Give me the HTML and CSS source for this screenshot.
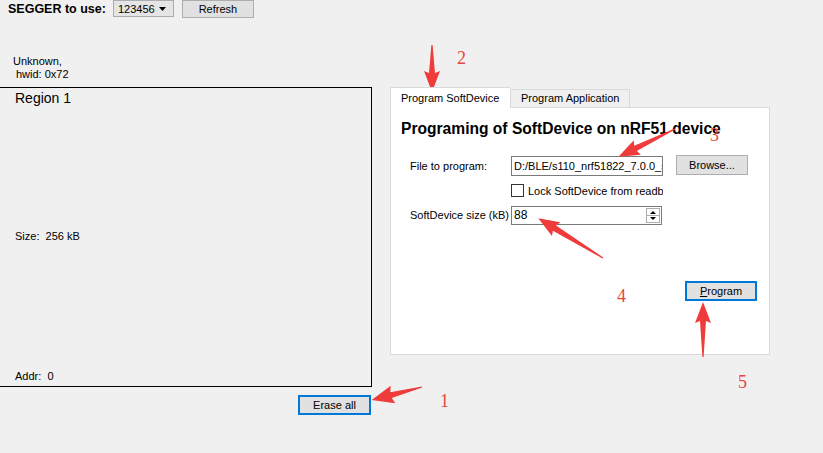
FILE: index.html
```html
<!DOCTYPE html>
<html lang="en">
<head>
    <meta charset="UTF-8">
    <title>nRFgo Studio - Program SoftDevice</title>
    <link rel="stylesheet" href="styles.css">
</head>
<body>
    <div class="toolbar">
        <span class="segger-label">SEGGER to use:</span>
        <div class="combo">
            <span>123456</span>
            <svg class="combo-arrow" width="7" height="4" viewBox="0 0 7 4"><path d="M0 0h7L3.5 4z" fill="#000"/></svg>
        </div>
        <button class="btn refresh">Refresh</button>
    </div>

    <div class="main">
        <div class="left">
            <div class="hwid">
                <div>Unknown,</div>
                <div class="hwid-line">hwid: 0x72</div>
            </div>
            <div class="region">
                <div class="region-title">Region 1</div>
                <div class="region-size">Size:&nbsp; 256 kB</div>
                <div>Addr:&nbsp; 0</div>
            </div>
            <button class="btn default erase">Erase all</button>
        </div>

        <div class="right">
            <div class="tabbar">
                <div class="tab active">Program SoftDevice</div>
                <div class="tab">Program Application</div>
            </div>
            <div class="pane">
                <h1 class="pane-title">Programing of SoftDevice on nRF51 device</h1>
                <div class="form">
                    <label class="form-label">File to program:</label>
                    <div class="textbox">D:/BLE/s110_nrf51822_7.0.0_softdevice.hex</div>
                    <button class="btn browse">Browse...</button>

                    <span></span>
                    <div class="check-row">
                        <span class="checkbox"></span>
                        <span>Lock SoftDevice from readback protection</span>
                    </div>
                    <span></span>

                    <label class="form-label">SoftDevice size (kB)</label>
                    <div class="spinbox">
                        <span>88</span>
                        <svg class="spin-buttons" width="14" height="15" viewBox="0 0 14 15">
                            <rect x="0.5" y="0.5" width="13" height="14" fill="#fff" stroke="#adadad"/>
                            <line x1="1" y1="7.5" x2="13" y2="7.5" stroke="#adadad"/>
                            <path d="M4 6h6L7 3z" fill="#000"/>
                            <path d="M4 9h6l-3 3z" fill="#000"/>
                        </svg>
                    </div>
                    <span></span>
                </div>
                <button class="btn default program"><u>P</u>rogram</button>
            </div>
        </div>
    </div>

    <svg class="marks" width="823" height="453" viewBox="0 0 823 453">
        <g fill="#f03b3b">
            <polygon transform="translate(432,45) rotate(90)" points="0,-0.6 28,-3 26,-8 47,0 26,8 28,3 0,0.6"/>
            <polygon transform="translate(675,129) rotate(153.8)" points="0,-0.6 44,-3 42,-8 63,0 42,8 44,3 0,0.6"/>
            <polygon transform="translate(603,258) rotate(-148.4)" points="0,-0.6 57,-3 55,-8 76,0 55,8 57,3 0,0.6"/>
            <polygon transform="translate(703,357) rotate(-90)" points="0,-0.6 36,-3 34,-8 55,0 34,8 36,3 0,0.6"/>
            <polygon transform="translate(422,387) rotate(165.4)" points="0,-0.6 32,-3 30,-9 52,0 30,9 32,3 0,0.6"/>
        </g>
        <g class="mark-num" fill="#e8453c">
            <text x="457" y="64">2</text>
            <text x="710" y="141">3</text>
            <text x="617" y="302">4</text>
            <text x="738" y="388">5</text>
            <text x="440" y="407">1</text>
        </g>
    </svg>
</body>
</html>
```

FILE: styles.css
```css
* {
    margin: 0;
    padding: 0;
    box-sizing: border-box;
}
body {
    position: relative;
    width: 823px;
    height: 453px;
    overflow: hidden;
    background-color: #f0f0f0;
    font-family: 'Liberation Sans', Arial, sans-serif;
    font-size: 11px;
    color: #000;
}
.toolbar {
    display: flex;
    align-items: flex-start;
    height: 18px;
    padding-left: 8px;
}
.segger-label {
    font-weight: bold;
    font-size: 12.5px;
    line-height: 18px;
}
.combo {
    display: flex;
    align-items: center;
    justify-content: space-between;
    width: 61px;
    height: 17px;
    margin-left: 7px;
    padding: 0 7px 0 4px;
    background-color: #e5e5e5;
    border: 1px solid #adadad;
}
.btn {
    font-family: 'Liberation Sans', Arial, sans-serif;
    font-size: 11px;
    color: #000;
    background-color: #e1e1e1;
    border: 1px solid #adadad;
}
.btn.default {
    border: 2px solid #0078d7;
}
.refresh {
    width: 72px;
    height: 18px;
    margin-left: 8px;
}
.main {
    display: flex;
    align-items: flex-start;
}
.left {
    width: 373px;
    margin-left: -1px;
    display: flex;
    flex-direction: column;
}
.hwid {
    padding: 37px 0 0 14px;
    line-height: 13px;
}
.hwid-line {
    padding-left: 3px;
}
.region {
    display: grid;
    grid-template-rows: auto 1fr auto;
    height: 300px;
    margin-top: 6px;
    padding: 2px 0 3px 15px;
    border: 1px solid #000;
    line-height: 13px;
}
.region-title {
    font-size: 14px;
    line-height: 17px;
}
.region-size {
    align-self: center;
    margin-bottom: 5px;
}
.erase {
    width: 73px;
    height: 20px;
    margin: 8px 0 0 299px;
}
.right {
    margin: 70px 0 0 18px;
    width: 380px;
}
.tabbar {
    display: flex;
    align-items: flex-end;
    height: 19px;
}
.tab {
    height: 18px;
    padding: 0 10px;
    line-height: 16px;
    background-color: #f0f0f0;
    border: 1px solid #d9d9d9;
    border-bottom: none;
}
.tab.active {
    position: relative;
    z-index: 1;
    width: 120px;
    height: 21px;
    margin-bottom: -1px;
    line-height: 20px;
    background-color: #fff;
    border-right: none;
}
.pane {
    display: flex;
    flex-direction: column;
    height: 248px;
    padding: 12px 12px 0 10px;
    background-color: #fff;
    border: 1px solid #d9d9d9;
}
.pane-title {
    font-size: 15.6px;
    line-height: 18px;
    font-weight: bold;
}
.form {
    display: grid;
    grid-template-columns: 110px 152px auto;
    grid-template-rows: 21px 19px 20px;
    row-gap: 5px;
    align-items: center;
    margin-top: 17px;
}
.form-label {
    padding-left: 9px;
    white-space: nowrap;
}
.textbox {
    height: 20px;
    padding: 0 2px;
    line-height: 18px;
    white-space: nowrap;
    overflow: hidden;
    background-color: #fff;
    border: 1px solid #7a7a7a;
}
.browse {
    justify-self: start;
    width: 72px;
    height: 20px;
    margin: -1px 0 0 13px;
}
.check-row {
    display: flex;
    align-items: center;
    gap: 4px;
    white-space: nowrap;
    overflow: hidden;
}
.checkbox {
    flex: none;
    width: 13px;
    height: 13px;
    background-color: #fff;
    border: 1px solid #333;
}
.spinbox {
    display: flex;
    align-items: center;
    justify-content: space-between;
    width: 151px;
    height: 19px;
    padding: 0 1px 0 2px;
    background-color: #fff;
    border: 1px solid #7a7a7a;
    font-size: 12px;
}
.program {
    align-self: flex-end;
    width: 72px;
    height: 20px;
    margin-top: 56px;
}
.marks {
    position: absolute;
    top: 0;
    left: 0;
    pointer-events: none;
}
.mark-num {
    font-family: 'Liberation Serif', serif;
    font-size: 18px;
}
```
